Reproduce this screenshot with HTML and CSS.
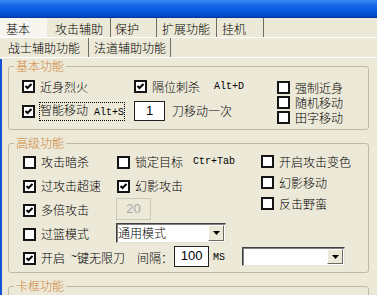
FILE: index.html
```html
<!DOCTYPE html>
<html>
<head>
	<meta charset="utf-8">
	<title>攻击辅助</title>
	<link rel="stylesheet" href="styles.css">
</head>
<body>
	<div class="titlebar"></div>
	<div class="tabs tabs-main">
		<div class="tab t1">基本</div>
		<div class="tab t2">攻击辅助</div>
		<div class="tab t3">保护</div>
		<div class="tab t4">扩展功能</div>
		<div class="tab t5">挂机</div>
	</div>
	<div class="tabs tabs-sub">
		<div class="tab s1">战士辅助功能</div>
		<div class="tab s2">法道辅助功能</div>
	</div>
	<div class="panel">
		<fieldset class="group group-basic">
			<legend>基本功能</legend>
			<div class="basic-body">
				<div class="basic-left">
					<div class="row r1">
						<label class="chk w112"><span class="box"><svg viewBox="0 0 9 9"><path d="M1.5 4 L3.5 6 L7.5 2"/></svg></span>近身烈火</label>
						<label class="chk"><span class="box"><svg viewBox="0 0 9 9"><path d="M1.5 4 L3.5 6 L7.5 2"/></svg></span>隔位刺杀</label>
						<span class="key gap14">Alt+D</span>
					</div>
					<div class="row r2">
						<label class="chk chk-focus w112"><span class="box"><svg viewBox="0 0 9 9"><path d="M1.5 4 L3.5 6 L7.5 2"/></svg></span><span class="focus">智能移动<span class="key"> Alt+S</span></span></label>
						<div class="edit w31">1</div>
						<span class="after-edit">刀移动一次</span>
					</div>
				</div>
				<div class="basic-right">
					<label class="chk"><span class="box"></span>强制近身</label>
					<label class="chk"><span class="box"></span>随机移动</label>
					<label class="chk"><span class="box"></span>田字移动</label>
				</div>
			</div>
		</fieldset>

		<fieldset class="group group-adv">
			<legend>高级功能</legend>
			<div class="adv-inner">
				<div class="adv-body">
					<div class="adv-grid">
						<label class="chk"><span class="box"></span>攻击暗杀</label>
						<div class="row">
							<label class="chk"><span class="box"></span>锁定目标</label>
							<span class="key gap10">Ctr+Tab</span>
						</div>
						<label class="chk"><span class="box"><svg viewBox="0 0 9 9"><path d="M1.5 4 L3.5 6 L7.5 2"/></svg></span>过攻击超速</label>
						<label class="chk"><span class="box"><svg viewBox="0 0 9 9"><path d="M1.5 4 L3.5 6 L7.5 2"/></svg></span>幻影攻击</label>
						<label class="chk"><span class="box"><svg viewBox="0 0 9 9"><path d="M1.5 4 L3.5 6 L7.5 2"/></svg></span>多倍攻击</label>
						<div class="edit off shift">20</div>
						<label class="chk"><span class="box"></span>过篮模式</label>
						<div class="combo w110 shift">
							<span class="combo-text">通用模式</span>
							<span class="combo-btn"><svg viewBox="0 0 7 4"><path d="M0 0 H7 L3.5 4 Z"/></svg></span>
						</div>
					</div>
					<div class="adv-right">
						<label class="chk"><span class="box"></span>开启攻击变色</label>
						<label class="chk"><span class="box"></span>幻影移动</label>
						<label class="chk"><span class="box"></span>反击野蛮</label>
					</div>
				</div>
				<div class="row row5">
					<label class="chk"><span class="box"><svg viewBox="0 0 9 9"><path d="M1.5 4 L3.5 6 L7.5 2"/></svg></span><span>开启<span class="key tilde"> ~</span>键无限刀</span></label>
					<span class="gap12">间隔：</span>
					<div class="edit w35 shift">100</div>
					<span class="key gap4">MS</span>
					<div class="combo w103 shift">
						<span class="combo-text"></span>
						<span class="combo-btn"><svg viewBox="0 0 7 4"><path d="M0 0 H7 L3.5 4 Z"/></svg></span>
					</div>
				</div>
			</div>
		</fieldset>

		<fieldset class="group group-card">
			<legend>卡框功能</legend>
		</fieldset>
	</div>
</body>
</html>
```

FILE: styles.css
```css
body {
	margin: 0;
	width: 377px;
	height: 295px;
	overflow: hidden;
	background-color: #ece9d8;
	font-family: "Noto Sans CJK SC", sans-serif;
	font-size: 12px;
	font-weight: 300;
	line-height: 14px;
	color: #000;
}
.titlebar {
	height: 18px;
	background: linear-gradient(#3d8bf2, #1767e6 5px, #0657dc 12px, #0348c6 16px, #00359e 18px);
}

/* tab rows */
.tabs {
	display: flex;
	height: 19px;
	border-bottom: 1px solid #fff;
}
.tab {
	box-sizing: border-box;
	height: 19px;
	padding-top: 4px;
	border-right: 1px solid #6f6d63;
	white-space: nowrap;
}
.t1 { width: 47px; padding-left: 6px; border-right: none; background-color: #f6f5f0; }
.t2 { width: 64px; padding-left: 8px; }
.t3 { width: 46px; padding-left: 4px; }
.t4 { width: 60px; padding-left: 5px; }
.t5 { width: 47px; padding-left: 5px; }
.tabs-sub .tab { padding-top: 3px; }
.s1 { width: 89px; padding-left: 8px; }
.s2 { width: 82px; padding-left: 5px; }

.panel {
	height: 237px;
	border-left: 2px solid #1550d8;
}

/* group boxes */
.group {
	box-sizing: border-box;
	width: 361px;
	margin: 0 0 0 6px;
	padding: 0;
	border: 1px solid #bcb9a9;
	border-radius: 3px;
}
.group legend {
	margin-left: 5px;
	padding: 0 2px;
	line-height: 14px;
	color: #d0843a;
}
.group-basic { margin-top: 1px; }
.group-adv { margin-top: 6px; }
.group-card { margin-top: 6px; height: 40px; }

.row {
	display: flex;
	align-items: center;
}

/* checkbox */
.chk {
	display: flex;
	align-items: center;
	gap: 5px;
	white-space: nowrap;
}
.box {
	box-sizing: border-box;
	width: 13px;
	height: 13px;
	padding: 0;
	border: 2px solid #141414;
	background-color: #fff;
	flex: none;
}
.box svg {
	display: block;
	width: 9px;
	height: 9px;
	fill: none;
	stroke: #000;
	stroke-width: 2;
}
.chk-focus { gap: 4px; }
.focus {
	border: 1px dotted #000;
}
.key {
	font-family: "Liberation Mono", monospace;
	font-size: 10px;
	font-weight: normal;
	white-space: pre;
}
.tilde {
	vertical-align: 3px;
}
.gap4 { margin-left: 4px; }
.gap10 { margin-left: 10px; }
.gap12 { margin-left: 12px; }
.gap14 { margin-left: 14px; }
.w112 { width: 112px; }

/* edits */
.edit {
	box-sizing: border-box;
	height: 20px;
	border: 1px solid #222;
	background-color: #fff;
	font-family: "Liberation Sans", sans-serif;
	font-size: 13px;
	font-weight: normal;
	line-height: 18px;
	text-align: center;
}
.w31 { width: 31px; }
.w35 { width: 35px; height: 21px; margin-left: 1px; }
.edit.off {
	width: 35px;
	height: 22px;
	margin-left: -1px;
	border-color: #cbc8b8;
	background-color: #ece9d8;
	color: #a8a8a8;
	line-height: 20px;
}
.shift { margin-bottom: 3px; }
.after-edit { margin-left: 7px; }

/* combo boxes */
.combo {
	box-sizing: border-box;
	display: flex;
	height: 20px;
	border: 1px solid;
	border-color: #404040 #e4e2d6 #e4e2d6 #404040;
	box-shadow: inset 1px 1px 0 #808080;
	background-color: #fff;
}
.combo-text {
	flex: 1;
	padding: 1px 0 0 1px;
	line-height: 16px;
}
.combo-btn {
	box-sizing: border-box;
	display: flex;
	justify-content: center;
	align-items: center;
	width: 16px;
	margin: 1px;
	border: 1px solid;
	border-color: #fff #6e6c62 #6e6c62 #fff;
	background-color: #ece9d8;
}
.combo-btn svg {
	width: 7px;
	height: 4px;
	fill: #000;
}
.w110 { width: 110px; margin-left: -1px; }
.w103 { width: 103px; height: 19px; margin-left: 17px; }

/* basic group */
.basic-body {
	display: flex;
	padding: 5px 0 4px 13px;
}
.basic-left { width: 255px; }
.basic-left .r1 { height: 17px; }
.basic-left .r2 { height: 20px; margin-top: 6px; }
.basic-right { padding-top: 2px; }
.basic-right .chk { height: 15px; }

/* advanced group */
.adv-inner { padding: 0 0 2px 14px; }
.adv-body { display: flex; }
.adv-grid {
	display: grid;
	grid-template-columns: 94px 144px;
	grid-auto-rows: 24px;
	align-items: center;
}
.adv-right { padding-top: 1px; }
.adv-right .chk { height: 21px; }
.row5 { height: 24px; }
```
